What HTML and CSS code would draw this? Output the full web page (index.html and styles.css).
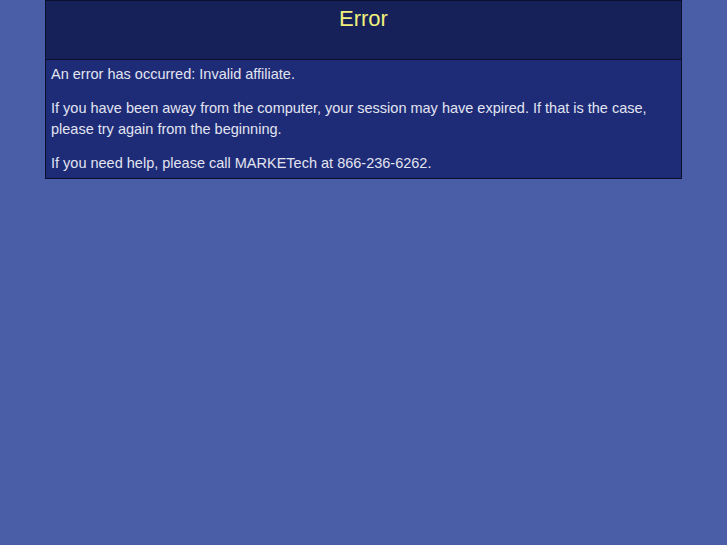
FILE: index.html
```html
<!DOCTYPE html>
<html lang="en">
<head>
    <meta charset="UTF-8">
    <title>Error</title>
    <link rel="stylesheet" href="styles.css">
</head>
<body>
    <div class="error-box">
        <div class="error-head">
            <h1>Error</h1>
        </div>
        <div class="error-body">
            <p>An error has occurred: Invalid affiliate.</p>
            <p>If you have been away from the computer, your session may have expired. If that is the case, please try again from the beginning.</p>
            <p>If you need help, please call MARKETech at 866-236-6262.</p>
        </div>
    </div>
</body>
</html>
```

FILE: styles.css
```css
body {
    margin: 0;
    background: #4a5ea8;
    font-family: "Liberation Sans", Arial, sans-serif;
}

.error-box {
    width: 635px;
    margin: 0 auto;
    border: 1px solid #0a0f2e;
}

.error-head {
    height: 58px;
    background: #16215a;
    border-bottom: 1px solid #0a0f2e;
    text-align: center;
}

.error-head h1 {
    margin: 0;
    padding-top: 5px;
    font-size: 22px;
    font-weight: normal;
    color: #f0f07c;
}

.error-body {
    background: #1e2c78;
    padding: 4px 5px;
    color: #e2e4f0;
    font-size: 14.5px;
    line-height: 21px;
}

.error-body p {
    margin: 0 0 13px;
}

.error-body p:last-child {
    margin-bottom: 0;
}
```
